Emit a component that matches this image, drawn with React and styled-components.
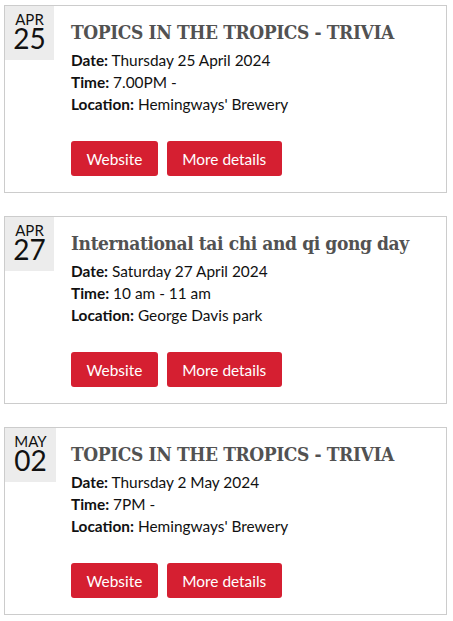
import React from 'react';
import styled, { createGlobalStyle } from 'styled-components';

const GlobalStyle = createGlobalStyle`
  body {
    margin: 0;
    background: #fff;
    font-family: Lato, "Liberation Sans", sans-serif;
    color: #111;
  }
`;

const List = styled.div`
  padding: 5px 6px 0 4px;
  display: flex;
  flex-direction: column;
  gap: 23px;
`;

const Card = styled.div`
  border: 1px solid #ccc;
  display: grid;
  grid-template-columns: 66px 1fr;
  align-items: start;
  height: 186px;
`;

const DateBox = styled.div`
  width: ${(p) => p.width || 49}px;
  height: 54px;
  background: #ececec;
  display: flex;
  flex-direction: column;
  align-items: center;
  color: #111;
`;

const Month = styled.div`
  font-size: 15px;
  line-height: 15px;
  margin-top: 6px;
`;

const Day = styled.div`
  font-size: 28px;
  line-height: 23px;
`;

const Body = styled.div`
  padding-top: 14px;
  display: flex;
  flex-direction: column;
  min-width: 0;
`;

const Title = styled.h2`
  margin: 0 0 5px;
  font-family: "DejaVu Serif Condensed", "DejaVu Serif", serif;
  font-stretch: condensed;
  font-weight: bold;
  font-size: 19px;
  letter-spacing: -0.4px;
  line-height: 24px;
  color: #525252;
  white-space: nowrap;
`;

const Line = styled.div`
  font-size: 15.4px;
  line-height: 22px;

  b {
    font-weight: bold;
  }
`;

const Buttons = styled.div`
  display: flex;
  gap: 9px;
  margin-top: 26px;
`;

const Button = styled.a`
  height: 35px;
  padding: 0 15.5px;
  display: flex;
  align-items: center;
  background: #d51f31;
  color: #fff;
  border-radius: 3px;
  font-size: 15.4px;
  text-decoration: none;
`;

const events = [
  { month: 'APR', day: '25', title: 'TOPICS IN THE TROPICS - TRIVIA', date: 'Thursday 25 April 2024', time: '7.00PM -', location: "Hemingways' Brewery" },
  { month: 'APR', day: '27', title: 'International tai chi and qi gong day', date: 'Saturday 27 April 2024', time: '10 am - 11 am', location: 'George Davis park' },
  { month: 'MAY', day: '02', title: 'TOPICS IN THE TROPICS - TRIVIA', date: 'Thursday 2 May 2024', time: '7PM -', location: "Hemingways' Brewery", wide: true },
];

const Event = ({ ev }) => (
  <Card>
    <DateBox width={ev.wide ? 51 : 49}>
      <Month>{ev.month}</Month>
      <Day>{ev.day}</Day>
    </DateBox>
    <Body>
      <Title>{ev.title}</Title>
      <Line><b>Date:</b> {ev.date}</Line>
      <Line><b>Time:</b> {ev.time}</Line>
      <Line><b>Location:</b> {ev.location}</Line>
      <Buttons>
        <Button href="#">Website</Button>
        <Button href="#">More details</Button>
      </Buttons>
    </Body>
  </Card>
);

const App = () => (
  <>
    <GlobalStyle />
    <List>
      {events.map((ev, i) => <Event key={i} ev={ev} />)}
    </List>
  </>
);

export default App;
